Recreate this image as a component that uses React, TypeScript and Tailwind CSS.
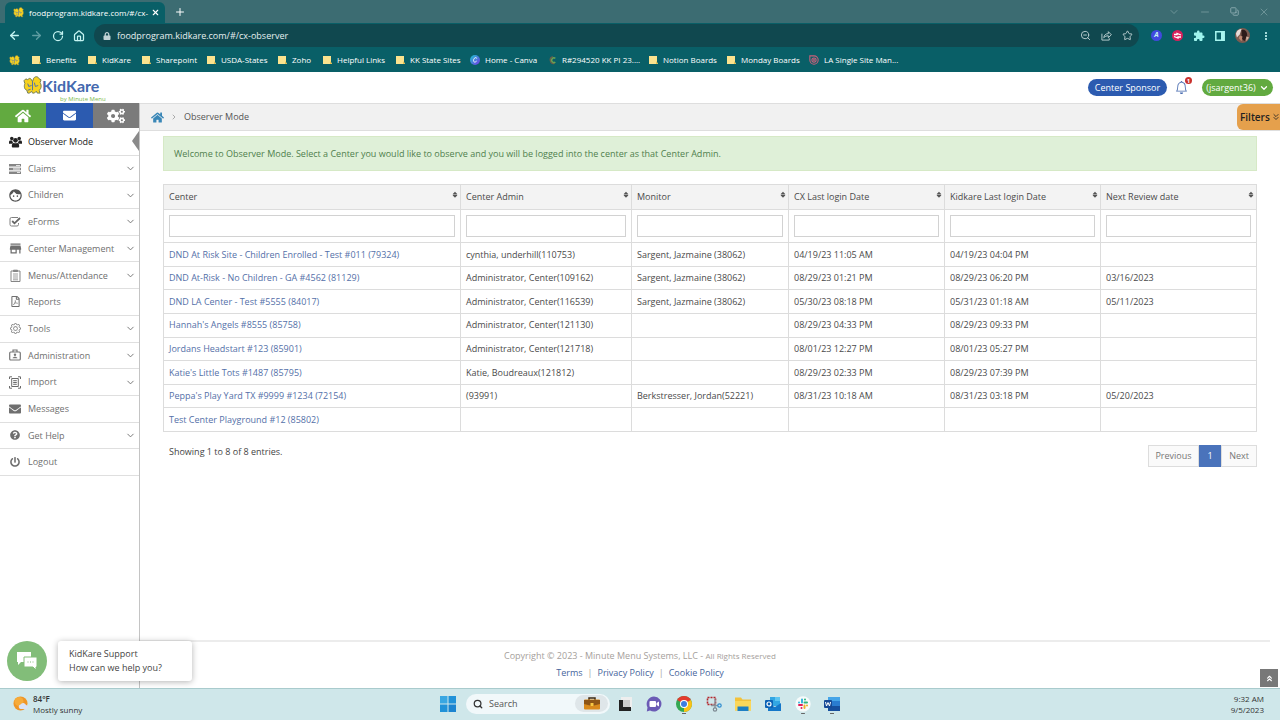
import type { ReactNode } from "react";
import {
    ArrowLeft,
    ArrowRight,
    ChevronDown,
    ChevronRight,
    ChevronsDown,
    ChevronsUp,
    Copy,
    House,
    Minus,
    Plus,
    RotateCw,
    Search,
    Star,
    X,
    ZoomOut,
} from "lucide-react";
import {
    FaCaretDown,
    FaCaretUp,
    FaCogs,
    FaEnvelope,
    FaHome,
    FaLock,
    FaPowerOff,
    FaQuestionCircle,
    FaRegFilePdf,
} from "react-icons/fa";
import { MdExtension, MdFace, MdMoreVert, MdStore } from "react-icons/md";
import { BsBell, BsGear } from "react-icons/bs";

interface NavItem {
    label: string;
    icon: ReactNode;
    expandable?: boolean;
    active?: boolean;
}

interface Center {
    name: string;
    admin: string;
    monitor: string;
    cxLogin: string;
    kkLogin: string;
    review: string;
}

function Birds({ className }: { className: string }) {
    return (
        <svg viewBox="0 0 20 20" className={className} aria-hidden="true">
            <path
                d="M1 5l2-2 2 1c1-2 3-2 4 0l1 2 1-3c1-3 5-3 6 0l2 1-1 3c2 3 1 7-1 8l1 3h-3l-1-2-2 2h-2l-1-2-2 2H5l-1-3c-3-1-3-5-2-7z"
                fill="#f7d21e"
                stroke="#6f7a55"
                strokeWidth="1"
            />
            <path d="M5 8l1 3 3-1M12 7l1 4 3-1M10 6v9M5 15l3-1" fill="none" stroke="#4a6fb0" strokeWidth="1" />
        </svg>
    );
}

function FolderMark() {
    return (
        <svg viewBox="0 0 10 10" className="size-[10px]" aria-hidden="true">
            <path d="M1 1h8v6l1 2H1z" fill="#fbe38e" />
            <path d="M8 6l2 3H8z" fill="#e8c04e" />
        </svg>
    );
}

function CanvaMark() {
    return (
        <svg viewBox="0 0 12 12" className="size-[10px]" aria-hidden="true">
            <defs>
                <linearGradient id="canva" x1="0" y1="0" x2="1" y2="1">
                    <stop offset="0" stopColor="#19c8d0" />
                    <stop offset="1" stopColor="#7a35e8" />
                </linearGradient>
            </defs>
            <circle cx="6" cy="6" r="6" fill="url(#canva)" />
            <path d="M8 4.200C8 2.500 5.300 2.800 4.400 5.400 3.600 8.400 5.800 9.600 8 7.200" fill="none" stroke="#fff" strokeWidth="1.100" />
        </svg>
    );
}

function CrescentMark() {
    return (
        <svg viewBox="0 0 12 12" className="size-[10px]" aria-hidden="true">
            <path d="M7 2A4 4 0 1 0 9 10" fill="none" stroke="#6d5b49" strokeWidth="1.500" />
            <path d="M10 4a2.800 2.800 0 1 0 0 4.500" fill="none" stroke="#6fa052" strokeWidth="1.800" />
        </svg>
    );
}

function SpiralMark() {
    return (
        <svg viewBox="0 0 12 12" className="size-[10px]" fill="none" stroke="#c9607a" strokeWidth="1.300" aria-hidden="true">
            <path d="M1 1h5a5 5 0 1 1-5 5z" />
            <circle cx="6" cy="6" r="2.500" />
            <circle cx="6" cy="6" r=".5" />
        </svg>
    );
}

// three heads with shoulders
function GroupIcon() {
    return (
        <svg viewBox="0 0 14 12" className="h-3 w-[13px]" fill="#222" aria-hidden="true">
            <circle cx="3" cy="2.200" r="1.900" />
            <circle cx="11" cy="2.200" r="1.900" />
            <circle cx="7" cy="4.200" r="2.500" />
            <path d="M0 8V6.200C0 4.800.8 4.300 2 4.500h1.700c-.2 1.500.3 2.200 1 2.700L3.500 8zM14 8V6.200c0-1.400-.8-1.900-2-1.700h-1.700c.2 1.500-.3 2.200-1 2.700l1.200.8z" />
            <path d="M3 10.500C3 8 4 7 5.200 7c1 .6 2.600.6 3.600 0C10 7 11 8 11 10.500c0 .9-.5 1.500-1.500 1.500h-5C3.500 12 3 11.400 3 10.500z" />
        </svg>
    );
}

function BarsIcon() {
    return (
        <svg viewBox="0 0 12 10" className="h-[10px] w-3" aria-hidden="true">
            <path d="M0 0h12v2.600H0zM0 3.700h12v2.600H0zM0 7.400h12V10H0z" fill="#858585" />
            <path d="M7 .9h4v.8H7zM4 4.600h7v.8H4zM8 8.300h3v.8H8z" fill="#fff" />
        </svg>
    );
}

function CheckIcon() {
    return (
        <svg viewBox="0 0 12 11" className="h-[11px] w-3" fill="none" aria-hidden="true">
            <path d="M9 1.500H2.500a1.500 1.500 0 0 0-1.500 1.500v5.500A1.500 1.500 0 0 0 2.500 10H8a1.500 1.500 0 0 0 1.500-1.500V7" stroke="#808080" />
            <path d="M3.200 5l2.300 2.300L11 2" stroke="#666" strokeWidth="1.800" />
        </svg>
    );
}

function ClipboardIcon() {
    return (
        <svg viewBox="0 0 11 13" className="h-[13px] w-[11px]" fill="none" stroke="#858585" aria-hidden="true">
            <path d="M1 2h9v10.500H1z" />
            <path d="M3.500 2.500V1.200h4v1.300z" fill="#858585" />
            <path d="M3 5h5M3 7h5M3 9h5M3 10.800h5" strokeWidth=".8" />
        </svg>
    );
}

function BadgeIcon() {
    return (
        <svg viewBox="0 0 12 12" className="size-3" fill="none" stroke="#777" aria-hidden="true">
            <rect x=".7" y="3" width="10.600" height="8" rx="1" strokeWidth="1.200" />
            <path d="M4 3V1h4v2" strokeWidth="1.200" />
            <circle cx="6" cy="5.800" r="1.200" fill="#777" stroke="none" />
            <path d="M3.600 9.300c.4-2 4.400-2 4.800 0z" fill="#777" stroke="none" />
        </svg>
    );
}

function ImportIcon() {
    return (
        <svg viewBox="0 0 12 13" className="h-[13px] w-3" fill="none" stroke="#6b6b6b" aria-hidden="true">
            <path d="M.5 3V.8H3M9 .8h2.500V3M.5 10v2.200H3M9 12.200h2.500V10" />
            <path d="M2.700 2.500h6.600v8H2.700z" />
            <path d="M4.200 4.700h3.600M4.200 6.500h3.600M4.200 8.300h3.600" />
        </svg>
    );
}

function ShareIcon() {
    return (
        <svg viewBox="0 0 12 12" className="size-[11px]" fill="none" stroke="currentColor" strokeWidth="1" aria-hidden="true">
            <path d="M1 4v7h8V9" />
            <path d="M3 8.500C3.500 5.500 5 4 8 4V1.800l3.300 3.400L8 8.400V6.300C6 6.300 4.500 6.800 3 8.500z" />
        </svg>
    );
}

function WeatherIcon() {
    return (
        <svg viewBox="0 0 16 16" className="size-4" aria-hidden="true">
            <circle cx="7.500" cy="7.500" r="7" fill="#ef9526" />
            <circle cx="6" cy="5.500" r="4.500" fill="#f6ab3a" />
            <path d="M7.500 13a2.300 2.300 0 0 1 0-4.500 3 3 0 0 1 5.500.6 2 2 0 0 1 .5 3.900z" fill="#d9e2f6" />
        </svg>
    );
}

const bookmarks: { label: string; icon: ReactNode; width: string }[] = [
    { label: "Benefits", icon: <FolderMark />, width: "w-[56px]" },
    { label: "KidKare", icon: <FolderMark />, width: "w-[54px]" },
    { label: "Sharepoint", icon: <FolderMark />, width: "w-[65px]" },
    { label: "USDA-States", icon: <FolderMark />, width: "w-[71px]" },
    { label: "Zoho", icon: <FolderMark />, width: "w-[45px]" },
    { label: "Helpful Links", icon: <FolderMark />, width: "w-[73px]" },
    { label: "KK State Sites", icon: <FolderMark />, width: "w-[75px]" },
    { label: "Home - Canva", icon: <CanvaMark />, width: "w-[77px]" },
    { label: "R#294520 KK PI 23....", icon: <CrescentMark />, width: "w-[101px]" },
    { label: "Notion Boards", icon: <FolderMark />, width: "w-[78px]" },
    { label: "Monday Boards", icon: <FolderMark />, width: "w-[83px]" },
    { label: "LA Single Site Man...", icon: <SpiralMark />, width: "w-[100px]" },
];

const navItems: NavItem[] = [
    { label: "Observer Mode", icon: <GroupIcon />, active: true },
    { label: "Claims", icon: <BarsIcon />, expandable: true },
    { label: "Children", icon: <MdFace className="size-[15px] text-[#555]" />, expandable: true },
    { label: "eForms", icon: <CheckIcon />, expandable: true },
    { label: "Center Management", icon: <MdStore className="size-[15px]" />, expandable: true },
    { label: "Menus/Attendance", icon: <ClipboardIcon />, expandable: true },
    { label: "Reports", icon: <FaRegFilePdf className="size-[11px]" /> },
    { label: "Tools", icon: <BsGear className="size-[11px]" />, expandable: true },
    { label: "Administration", icon: <BadgeIcon />, expandable: true },
    { label: "Import", icon: <ImportIcon />, expandable: true },
    { label: "Messages", icon: <FaEnvelope className="size-3" /> },
    { label: "Get Help", icon: <FaQuestionCircle className="size-[10px]" />, expandable: true },
    { label: "Logout", icon: <FaPowerOff className="size-[10px]" /> },
];

const columns = ["Center", "Center Admin", "Monitor", "CX Last login Date", "Kidkare Last login Date", "Next Review date"];

const centers: Center[] = [
    { name: "DND At Risk Site - Children Enrolled - Test #011 (79324)", admin: "cynthia, underhill(110753)", monitor: "Sargent, Jazmaine (38062)", cxLogin: "04/19/23 11:05 AM", kkLogin: "04/19/23 04:04 PM", review: "" },
    { name: "DND At-Risk - No Children - GA #4562 (81129)", admin: "Administrator, Center(109162)", monitor: "Sargent, Jazmaine (38062)", cxLogin: "08/29/23 01:21 PM", kkLogin: "08/29/23 06:20 PM", review: "03/16/2023" },
    { name: "DND LA Center - Test #5555 (84017)", admin: "Administrator, Center(116539)", monitor: "Sargent, Jazmaine (38062)", cxLogin: "05/30/23 08:18 PM", kkLogin: "05/31/23 01:18 AM", review: "05/11/2023" },
    { name: "Hannah's Angels #8555 (85758)", admin: "Administrator, Center(121130)", monitor: "", cxLogin: "08/29/23 04:33 PM", kkLogin: "08/29/23 09:33 PM", review: "" },
    { name: "Jordans Headstart #123 (85901)", admin: "Administrator, Center(121718)", monitor: "", cxLogin: "08/01/23 12:27 PM", kkLogin: "08/01/23 05:27 PM", review: "" },
    { name: "Katie's Little Tots #1487 (85795)", admin: "Katie, Boudreaux(121812)", monitor: "", cxLogin: "08/29/23 02:33 PM", kkLogin: "08/29/23 07:39 PM", review: "" },
    { name: "Peppa's Play Yard TX #9999 #1234 (72154)", admin: "(93991)", monitor: "Berkstresser, Jordan(52221)", cxLogin: "08/31/23 10:18 AM", kkLogin: "08/31/23 03:18 PM", review: "05/20/2023" },
    { name: "Test Center Playground #12 (85802)", admin: "", monitor: "", cxLogin: "", kkLogin: "", review: "" },
];

function BrowserChrome() {
    return (
        <div className="bg-[#095f67] text-white">
            <div className="flex h-[23px] items-center bg-[#3c6c72] pl-[5px]">
                <div className="mt-[2px] flex h-[21px] w-[160px] items-center rounded-t-md bg-[#095f67] pl-2 pr-[5px]">
                    <Birds className="size-[11px] shrink-0" />
                    <span className="ml-[5px] whitespace-nowrap text-[8px]">foodprogram.kidkare.com/#/cx-</span>
                    <button aria-label="Close tab" className="ml-auto">
                        <X className="size-[9px]" strokeWidth={3} />
                    </button>
                </div>
                <button aria-label="New tab" className="ml-[9px]">
                    <Plus className="size-3" strokeWidth={2} />
                </button>
                <div className="ml-auto flex items-center gap-[19px] pr-[10px] text-[#9dbabd]">
                    <button aria-label="Search tabs"><ChevronDown className="size-3" strokeWidth={1} /></button>
                    <button aria-label="Minimize"><Minus className="size-3" strokeWidth={1} /></button>
                    <button aria-label="Restore"><Copy className="size-[9px] -scale-x-100 rotate-90" strokeWidth={2} /></button>
                    <button aria-label="Close window"><X className="size-3" strokeWidth={1} /></button>
                </div>
            </div>
            <div className="flex h-[25px] items-center gap-[9px] pl-2 text-[#c5f4f2]">
                <button aria-label="Back"><ArrowLeft className="size-[13px]" strokeWidth={2.5} /></button>
                <button aria-label="Forward" className="text-[#5f9da2]"><ArrowRight className="size-[13px]" strokeWidth={2.5} /></button>
                <button aria-label="Reload"><RotateCw className="size-3" strokeWidth={2.5} /></button>
                <button aria-label="Home"><House className="size-3" strokeWidth={2.5} /></button>
                <div className="flex h-[23px] flex-1 items-center rounded-full bg-[#10484f] pl-[9px] pr-[6px] text-[#c0d2d4]">
                    <FaLock className="size-2" />
                    <input
                        aria-label="Address"
                        defaultValue="foodprogram.kidkare.com/#/cx-observer"
                        className="ml-[6px] min-w-0 flex-1 bg-transparent text-[9px] text-[#e6eff0] outline-none"
                    />
                    <div className="flex gap-[10px]">
                        <button aria-label="Zoom"><ZoomOut className="size-[11px]" /></button>
                        <button aria-label="Share"><ShareIcon /></button>
                        <button aria-label="Bookmark"><Star className="size-[11px]" /></button>
                    </div>
                </div>
                <div className="flex items-center gap-[10px] pl-[3px] pr-2">
                    <span className="grid size-[11px] place-items-center rounded-full bg-[#4149df] text-[7px] font-bold italic">A</span>
                    <svg viewBox="0 0 11 11" className="size-[11px]" aria-hidden="true">
                        <circle cx="5.500" cy="5.500" r="5.500" fill="#d81f5b" />
                        <path d="M2 4.500h3v-1l4 1.500M2 6.500l4 1.500V7h3" fill="none" stroke="#fff" strokeWidth="1.300" />
                    </svg>
                    <MdExtension className="size-3 text-[#9ff4ee]" />
                    <svg viewBox="0 0 10 10" className="size-[10px]" aria-hidden="true">
                        <path d="M.8.800h8.400v8.400H.8z" fill="none" stroke="#a8f6f0" strokeWidth="1.500" />
                        <path d="M6 1h3v8H6z" fill="#a8f6f0" />
                    </svg>
                    <svg viewBox="0 0 16 16" className="size-[15px]" aria-hidden="true">
                        <circle cx="8" cy="8" r="8" fill="#7b5b50" />
                        <path d="M1 6c1-4 4-5 6-5l-2 6-3 3z" fill="#e6dcd8" />
                        <path d="M7 2c4-1 6 2 6 6l-3 6-3-3z" fill="#2d1c1a" />
                        <path d="M12 9l3 1-3 4z" fill="#d7b7a4" />
                        <path d="M5 8l3 1-1 5-3-3z" fill="#c08870" />
                    </svg>
                    <button aria-label="Menu"><MdMoreVert className="size-3" /></button>
                </div>
            </div>
            <div className="flex h-[24px] items-center pl-[9px]">
                <Birds className="size-[11px]" />
                <nav aria-label="Bookmarks" className="ml-[11px] flex text-[8px]">
                    {bookmarks.map((mark) => (
                        <a key={mark.label} href="#" className={`flex items-center gap-[5px] whitespace-nowrap ${mark.width}`}>
                            {mark.icon}
                            {mark.label}
                        </a>
                    ))}
                </nav>
            </div>
        </div>
    );
}

function Header() {
    return (
        <header className="flex h-[31px] items-center bg-white pl-[23px] pr-[7px]">
            <div className="flex self-end">
                <Birds className="size-[19px]" />
                <div>
                    <div className="font-[Lato] text-[16px] font-bold leading-[19px] text-[#4468ae]">KidKare</div>
                    <div className="pl-[18px] text-[6px] leading-[8px] text-[#7cba4c]">by Minute Menu</div>
                </div>
            </div>
            <div className="ml-auto flex items-center text-[9px] text-white">
                <button className="h-[17px] w-[79px] rounded-full bg-[#2c5bb0]">Center Sponsor</button>
                <button aria-label="Notifications" className="relative ml-2 text-[#4468ae]">
                    <BsBell className="size-[13px]" />
                    <span className="absolute -right-1 -top-1 grid size-[7px] place-items-center rounded-full bg-[#c9302c] text-[6px] font-bold leading-none text-white">1</span>
                </button>
                <button className="ml-[14px] flex h-[17px] w-[71px] items-center justify-center gap-[3px] rounded-full bg-[#62aa40]">
                    (jsargent36)
                    <ChevronDown className="size-[10px]" strokeWidth={3} />
                </button>
            </div>
        </header>
    );
}

function Sidebar() {
    return (
        <aside className="w-[140px] shrink-0 border-r border-[#c4c4c4] bg-white">
            <div className="grid h-[25px] grid-cols-3 text-white">
                <a href="#" aria-label="Home" className="grid place-items-center bg-[#62aa40]"><FaHome className="size-4" /></a>
                <a href="#" aria-label="Mail" className="grid place-items-center bg-[#2c5bb0]"><FaEnvelope className="size-[13px]" /></a>
                <a href="#" aria-label="Settings" className="grid place-items-center bg-[#7b7b7b]"><FaCogs className="size-[18px]" /></a>
            </div>
            <nav className="grid h-[348px] auto-rows-fr pt-px text-[9px] text-[#6f6f6f]">
                {navItems.map((item) => (
                    <a
                        key={item.label}
                        href="#"
                        className={`relative flex items-center border-b border-[#dfdfdf] pl-2 pr-[3px] ${item.active ? "text-[#222]" : ""}`}
                    >
                        <span className="grid w-[14px] place-items-center">{item.icon}</span>
                        <span className="ml-[6px] font-medium">{item.label}</span>
                        {item.expandable && <ChevronDown className="ml-auto size-[11px]" strokeWidth={2} />}
                        {item.active && (
                            <svg viewBox="0 0 7 20" className="absolute right-0 top-[2px] h-5 w-[7px]" aria-hidden="true">
                                <path d="M7 0v20L0 10z" fill="#8a8a8a" />
                            </svg>
                        )}
                    </a>
                ))}
            </nav>
        </aside>
    );
}

function CenterTable() {
    return (
        <table className="h-[248px] w-full table-fixed border-collapse text-left text-[9px] text-[#4a4a4a]">
            <colgroup>
                <col className="w-[297px]" />
                <col className="w-[171px]" />
                <col className="w-[157px]" />
                <col className="w-[156px]" />
                <col className="w-[156px]" />
                <col className="w-[156px]" />
            </colgroup>
            <thead>
                <tr className="h-[25px] bg-[#f3f3f3]">
                    {columns.map((column) => (
                        <th key={column} className="border border-[#dcdcdc] pl-[5px] pr-px font-medium">
                            <div className="flex items-center justify-between">
                                {column}
                                <span className="flex flex-col pb-[6px] text-[#555]">
                                    <FaCaretUp className="-mb-[4px] size-2" />
                                    <FaCaretDown className="-mt-[1px] size-2" />
                                </span>
                            </div>
                        </th>
                    ))}
                </tr>
                <tr className="h-[33px]">
                    {columns.map((column) => (
                        <td key={column} className="border border-[#dcdcdc] px-[5px]">
                            <input aria-label={`Filter ${column}`} className="block h-[22px] w-full border border-[#d2d2d2] bg-white px-1 outline-none" />
                        </td>
                    ))}
                </tr>
            </thead>
            <tbody>
                {centers.map((center) => (
                    <tr key={center.name}>
                        <td className="border border-[#dcdcdc] px-[5px]">
                            <a href="#" className="text-[#5470a8]">{center.name}</a>
                        </td>
                        <td className="border border-[#dcdcdc] px-[5px]">{center.admin}</td>
                        <td className="border border-[#dcdcdc] px-[5px]">{center.monitor}</td>
                        <td className="border border-[#dcdcdc] px-[5px]">{center.cxLogin}</td>
                        <td className="border border-[#dcdcdc] px-[5px]">{center.kkLogin}</td>
                        <td className="border border-[#dcdcdc] px-[5px]">{center.review}</td>
                    </tr>
                ))}
            </tbody>
        </table>
    );
}

function Taskbar() {
    return (
        <div className="grid h-8 grid-cols-[1fr_auto_1fr] items-center border-t border-[#a9cbcd] bg-[#cfe7ea] pb-[2px] text-[8px] leading-[11px] text-[#333]">
            <div className="flex items-center gap-1 pl-[13px]">
                <WeatherIcon />
                <div>
                    <div className="font-semibold">84°F</div>
                    <div>Mostly sunny</div>
                </div>
            </div>
            <div className="flex items-center pl-[7px]">
                <button aria-label="Start">
                    <svg viewBox="0 0 16 16" className="size-4" fill="#1c84d0" aria-hidden="true">
                        <path d="M0 0h7.500v7.500H0z" fill="#39a7e2" />
                        <path d="M8.500 0H16v7.500H8.500zM0 8.500h7.500V16H0z" fill="#2192d8" />
                        <path d="M8.500 8.500H16V16H8.500z" />
                    </svg>
                </button>
                <label className="ml-[10px] flex h-[20px] w-[144px] items-center rounded-full bg-[#f1f8fa] pl-[7px]">
                    <Search className="size-[10px]" strokeWidth={3} />
                    <input aria-label="Search" placeholder="Search" className="ml-[6px] w-[86px] text-[9px] outline-none placeholder:text-[#555]" />
                    <span className="grid h-[17px] w-[33px] place-items-center rounded-full bg-[#dfe6e9]">
                        <svg viewBox="0 0 16 13" className="h-[13px] w-4" aria-hidden="true">
                            <path d="M5 3V1h6v2" fill="none" stroke="#3f2c16" strokeWidth="1.500" />
                            <rect y="2.500" width="16" height="10" rx="1" fill="#d98a1c" />
                            <path d="M0 3h16v4l-8 2-8-2z" fill="#8d5516" />
                            <path d="M6.500 6h3v3h-3z" fill="#f7c843" />
                        </svg>
                    </span>
                </label>
                <div className="grid w-[237px] grid-cols-8 place-items-center">
                    <svg viewBox="0 0 16 16" className="size-4" aria-hidden="true">
                        <path d="M4 1h11v11H4z" fill="#eee" />
                        <path d="M2 4h4v7h8v4H2z" fill="#222" />
                        <path d="M6 4h7v7H6z" fill="#ccc" />
                    </svg>
                    <svg viewBox="0 0 16 16" className="size-4" aria-hidden="true">
                        <path d="M8 .5A7.500 7.500 0 1 1 4 14.400L.8 15.500l.7-4A7.500 7.500 0 0 1 8 .5z" fill="#6b5bb5" />
                        <rect x="3.500" y="5" width="6.500" height="6" rx="1" fill="#fff" />
                        <path d="M10.500 7l2.500-1.500v5L10.500 9z" fill="#fff" />
                    </svg>
                    <svg viewBox="0 0 16 20" className="h-5 w-4" aria-hidden="true">
                        <circle cx="8" cy="10" r="8" fill="#34a853" />
                        <path d="M8 10L1.100 6A8 8 0 0 1 14.900 6z" fill="#e33b2e" />
                        <path d="M8 10h0l6.900-4A8 8 0 0 1 8 18z" fill="#fbc116" />
                        <circle cx="8" cy="10" r="4" fill="#fff" />
                        <circle cx="8" cy="10" r="3" fill="#3d7de0" />
                        <path d="M6 19.500h4" stroke="#666" />
                    </svg>
                    <svg viewBox="0 0 16 16" className="size-4" fill="none" aria-hidden="true">
                        <path d="M1.500 1.500h8v7h-8z" stroke="#b3262c" strokeWidth="1.600" strokeDasharray="2 1" />
                        <path d="M9 3v9M5 9.500h7" stroke="#8a9299" strokeWidth="1.300" />
                        <circle cx="9" cy="13.500" r="1.700" stroke="#7d8a93" strokeWidth="1.200" />
                        <circle cx="13.500" cy="9.500" r="1.700" stroke="#2f8dd0" strokeWidth="1.200" />
                    </svg>
                    <svg viewBox="0 0 18 16" className="h-4 w-[18px]" aria-hidden="true">
                        <path d="M1 1.500h6l1.500 2H17v11H1z" fill="#f3c23b" />
                        <path d="M1 5h16v9.500H1z" fill="#fbd75b" />
                        <path d="M3.500 10.500h11V15h-11z" fill="#1d7fc4" />
                    </svg>
                    <svg viewBox="0 0 18 16" className="h-4 w-[18px]" aria-hidden="true">
                        <path d="M6 1h10v9H6z" fill="#32a6e3" />
                        <path d="M4 8l7 3 6-4v8H4z" fill="#1477c9" />
                        <path d="M11 1h5v4h-5z" fill="#5cc5f1" />
                        <rect x="1" y="4" width="8" height="8" rx="1" fill="#0c62b5" />
                        <circle cx="5" cy="8" r="2" fill="none" stroke="#fff" strokeWidth="1.200" />
                    </svg>
                    <svg viewBox="0 0 16 20" className="h-5 w-4" fill="none" strokeWidth="2" strokeLinecap="round" aria-hidden="true">
                        <circle cx="8" cy="10" r="7.700" fill="#f7fbfb" />
                        <path d="M7 5.500v3M4 8.500h0" stroke="#36b6dc" />
                        <path d="M9.500 8.500h2.500M10 5.500v0" stroke="#2eb67d" />
                        <path d="M4 11h3M6.500 14v0" stroke="#e01e5a" />
                        <path d="M9.500 11.500v2.500M12 11.500h0" stroke="#ecb22e" />
                        <path d="M6.500 19.500h3" stroke="#666" strokeWidth="1" />
                    </svg>
                    <svg viewBox="0 0 18 20" className="h-5 w-[18px]" aria-hidden="true">
                        <path d="M5 3h12v4.500H5z" fill="#45a5e8" />
                        <path d="M5 7h12v5H5z" fill="#2a7cd0" />
                        <path d="M5 12h12v5H5z" fill="#164f9e" />
                        <rect x="1" y="6" width="8" height="8" rx="1" fill="#164a96" />
                        <path d="M2.500 8l1 4L5 8.500 6.500 12l1-4" fill="none" stroke="#fff" />
                        <path d="M7 19.500h4" stroke="#666" />
                    </svg>
                </div>
            </div>
            <div className="pr-[16px] text-right">
                <div>9:32 AM</div>
                <div>9/5/2023</div>
            </div>
        </div>
    );
}

export default function App() {
    return (
        <div className="flex min-h-screen flex-col bg-white font-['Open_Sans',sans-serif]">
            <BrowserChrome />
            <Header />
            <div className="relative flex flex-1">
                <Sidebar />
                <div className="flex min-w-0 flex-1 flex-col bg-white">
                    <div className="flex h-[28px] items-center border-y border-[#dedede] bg-[#f1f1f1] pl-[11px] text-[9px] text-[#555]">
                        <a href="#" aria-label="Home"><FaHome className="size-[13px] text-[#3a87b7]" /></a>
                        <ChevronRight className="mx-[6px] size-2 text-[#888]" />
                        Observer Mode
                    </div>
                    <main className="flex-1 pl-[23px] pr-[23px] pt-[5px]">
                        <div className="mb-[13px] flex h-[35px] items-center border border-[#d6e9c6] bg-[#dff0d8] pl-[10px] text-[9px] text-[#4f7f4d]">
                            Welcome to Observer Mode. Select a Center you would like to observe and you will be logged into the center as that Center Admin.
                        </div>
                        <CenterTable />
                        <div className="flex items-start justify-between pt-[13px]">
                            <p className="pl-[6px] text-[9px] leading-[14px] text-[#444]">Showing 1 to 8 of 8 entries.</p>
                            <div className="flex h-[22px] text-[9px] text-[#777]">
                                <button className="w-[51px] border border-[#ddd] bg-[#fafafa]">Previous</button>
                                <button className="w-[22px] bg-[#4a73bb] text-white">1</button>
                                <button className="w-[36px] border border-[#ddd] bg-[#fafafa]">Next</button>
                            </div>
                        </div>
                    </main>
                    <footer className="mr-[10px] flex h-[48px] flex-col items-center border-t-2 border-[#ececec] pr-[130px] pt-[5px] text-[9px] leading-[17px] text-[#a5a09b]">
                        <p>
                            Copyright © 2023 - Minute Menu Systems, LLC - <span className="text-[8px]">All Rights Reserved</span>
                        </p>
                        <p className="flex gap-[5px]">
                            <a href="#" className="text-[#46659c]">Terms</a>|
                            <a href="#" className="text-[#46659c]">Privacy Policy</a>|
                            <a href="#" className="text-[#46659c]">Cookie Policy</a>
                        </p>
                    </footer>
                </div>

                <button className="absolute right-0 top-px flex h-[26px] w-[43px] items-center gap-px rounded-l-md bg-[#e5a04c] pl-[3px] text-[10px] font-semibold text-[#222]">
                    Filters
                    <ChevronsDown className="size-[10px] shrink-0" strokeWidth={2} />
                </button>

                <div className="absolute bottom-[7px] left-[7px] flex items-center gap-[11px]">
                    <button aria-label="Open chat" className="grid size-10 place-items-center rounded-full bg-[#82bd79]">
                        <svg viewBox="0 0 22 20" className="h-5 w-[22px]" aria-hidden="true">
                            <path d="M1 1h14v10H5l-3 3v-3H1z" fill="#fff" />
                            <path d="M8 6h13v10h-1v3l-3-3H8z" fill="#fff" stroke="#82bd79" />
                            <path d="M11.500 11h1M14 11h1M16.500 11h1" stroke="#82bd79" />
                        </svg>
                    </button>
                    <div className="h-10 w-[134px] rounded-[3px] bg-white pl-[11px] pt-[6px] text-[#444] shadow-[0_1px_6px_rgba(0,0,0,0.3)]">
                        <p className="text-[9px] leading-[14px]">KidKare Support</p>
                        <p className="text-[9px] leading-[14px]">How can we help you?</p>
                    </div>
                </div>

                <button aria-label="Back to top" className="absolute bottom-px right-[2px] grid size-[18px] place-items-center bg-[#787878] text-white">
                    <ChevronsUp className="size-[9px]" strokeWidth={3} />
                </button>
            </div>
            <Taskbar />
        </div>
    );
}
